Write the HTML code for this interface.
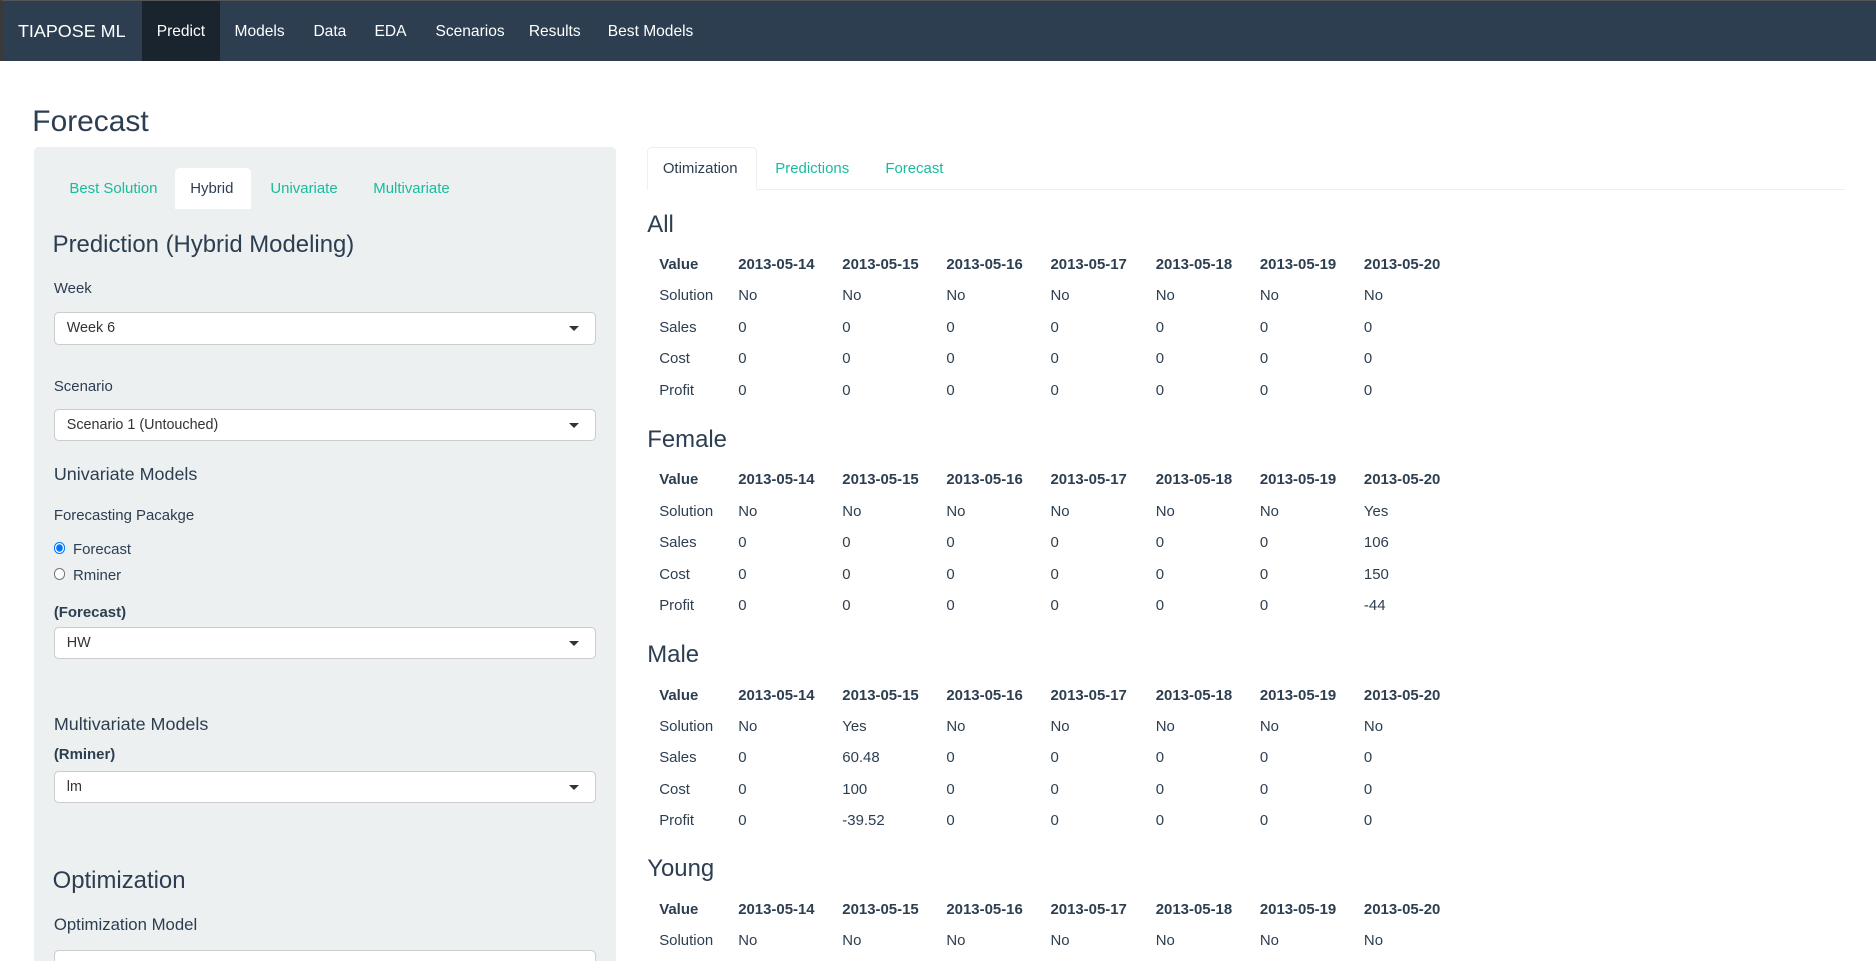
<!DOCTYPE html>
<html><head><meta charset="utf-8"><style>
html{zoom:1.19643;overflow:hidden}
body{margin:0;overflow:hidden;background:#fff}
#w{width:1568px;height:803px;overflow:hidden;font-family:"Liberation Sans",sans-serif;color:#2c3e50;font-size:12.5px;position:relative}
.a{position:absolute;white-space:nowrap;line-height:16px;height:16px;margin-top:1px}
.nav{position:absolute;left:0;top:0;width:1568px;height:51px;background:#2c3e50;border-top:1px solid #555;border-left:3px solid #3a3a3a;box-sizing:border-box}
.nav .a{color:#fff;top:17px;font-size:13px}
.well{position:absolute;left:28px;top:123px;width:487px;height:680px;background:#ecf0f1;border-radius:4px 4px 0 0}
.sel{position:absolute;left:45px;width:453px;height:27px;background:#fff;border:1px solid #ccc;border-radius:4px;box-sizing:border-box}
.sel span{position:absolute;left:10px;top:6px;font-size:12px;color:#333}
.sel i{position:absolute;right:13px;top:11px;border-left:5px solid transparent;border-right:5px solid transparent;border-top:5px solid #333}
.t{color:#18bc9c}
.b{font-weight:bold}
</style></head><body><div id="w">
<div class="nav"></div>
<div style="position:absolute;left:119px;top:1px;width:65px;height:50px;background:#1a242f"></div>
<div class="nav" style="background:none;border:none">
<div class="a" style="left:15px;font-size:15px;top:17px">TIAPOSE ML</div>
<div class="a" style="left:131px">Predict</div>
<div class="a" style="left:196px">Models</div>
<div class="a" style="left:262px">Data</div>
<div class="a" style="left:313px">EDA</div>
<div class="a" style="left:364px">Scenarios</div>
<div class="a" style="left:442px">Results</div>
<div class="a" style="left:508px">Best Models</div>
</div>
<div class="a" style="left:27px;top:86px;font-size:25px;height:30px;line-height:30px">Forecast</div>

<div class="well"></div>
<div style="position:absolute;left:146px;top:140px;width:64px;height:35px;background:#fff;border-radius:4px 4px 0 0"></div>
<div class="a t" style="left:58px;top:149px">Best Solution</div>
<div class="a" style="left:159px;top:149px">Hybrid</div>
<div class="a t" style="left:226px;top:149px">Univariate</div>
<div class="a t" style="left:312px;top:149px">Multivariate</div>
<div class="a" style="left:44px;top:192px;font-size:20px;height:24px;line-height:24px">Prediction (Hybrid Modeling)</div>
<div class="a" style="left:45px;top:232px">Week</div>
<div class="sel" style="top:261px"><span>Week 6</span><i></i></div>
<div class="a" style="left:45px;top:314px">Scenario</div>
<div class="sel" style="top:342px"><span>Scenario 1 (Untouched)</span><i></i></div>
<div class="a" style="left:45px;top:387px;font-size:15px;height:18px;line-height:18px">Univariate Models</div>
<div class="a" style="left:45px;top:422px">Forecasting Pacakge</div>
<div style="position:absolute;left:45px;top:453px;width:8px;height:8px;border-radius:50%;border:1px solid #0075ff;background:radial-gradient(#0075ff 0 2.5px,#fff 3px)"></div>
<div class="a" style="left:61px;top:450px">Forecast</div>
<div style="position:absolute;left:45px;top:475px;width:8px;height:8px;border-radius:50%;border:1px solid #777;background:#fff"></div>
<div class="a" style="left:61px;top:472px">Rminer</div>
<div class="a b" style="left:45px;top:503px">(Forecast)</div>
<div class="sel" style="top:524px"><span>HW</span><i></i></div>
<div class="a" style="left:45px;top:596px;font-size:15px;height:18px;line-height:18px">Multivariate Models</div>
<div class="a b" style="left:45px;top:622px">(Rminer)</div>
<div class="sel" style="top:644px"><span>lm</span><i></i></div>
<div class="a" style="left:44px;top:724px;font-size:20px;height:24px;line-height:24px">Optimization</div>
<div class="a" style="left:45px;top:763px;font-size:14px;height:18px;line-height:18px">Optimization Model</div>
<div class="sel" style="top:794px;height:9px;border-bottom:none;border-radius:4px 4px 0 0"></div>

<div style="position:absolute;left:541px;top:158px;width:1001px;height:1px;background:#ecf0f1"></div>
<div style="position:absolute;left:541px;top:123px;width:92px;height:36px;background:#fff;border:1px solid #ecf0f1;border-bottom:1px solid #fff;border-radius:4px 4px 0 0;box-sizing:border-box"></div>
<div class="a" style="left:554px;top:132px">Otimization</div>
<div class="a t" style="left:648px;top:132px">Predictions</div>
<div class="a t" style="left:740px;top:132px">Forecast</div>

<div id="tables"></div>
</div>
<script>
var secs=[["All",187,[["No","No","No","No","No","No","No"],["0","0","0","0","0","0","0"],["0","0","0","0","0","0","0"],["0","0","0","0","0","0","0"]]],
["Female",367,[["No","No","No","No","No","No","Yes"],["0","0","0","0","0","0","106"],["0","0","0","0","0","0","150"],["0","0","0","0","0","0","-44"]]],
["Male",547,[["No","Yes","No","No","No","No","No"],["0","60.48","0","0","0","0","0"],["0","100","0","0","0","0","0"],["0","-39.52","0","0","0","0","0"]]],
["Young",726,[["No","No","No","No","No","No","No"]]]];
var xs=[551,617,704,791,878,966,1053,1140],labels=["Solution","Sales","Cost","Profit"];
var h="";
secs.forEach(function(s){
 h+='<div class="a" style="left:541px;top:'+(s[1]-12)+'px;font-size:20px;height:24px;line-height:24px">'+s[0]+'</div>';
 var y=s[1]+33;
 h+='<div class="a b" style="left:551px;top:'+(y-8)+'px">Value</div>';
 for(var d=0;d<7;d++)h+='<div class="a b" style="left:'+xs[d+1]+'px;top:'+(y-8)+'px">2013-05-'+(14+d)+'</div>';
 for(var r=0;r<s[2].length;r++){var yy=y+26.3*(r+1);
  h+='<div class="a" style="left:551px;top:'+(yy-8)+'px">'+labels[r]+'</div>';
  for(var d=0;d<7;d++)h+='<div class="a" style="left:'+xs[d+1]+'px;top:'+(yy-8)+'px">'+s[2][r][d]+'</div>';}
});
document.getElementById("tables").innerHTML=h;
</script>
</body></html>
